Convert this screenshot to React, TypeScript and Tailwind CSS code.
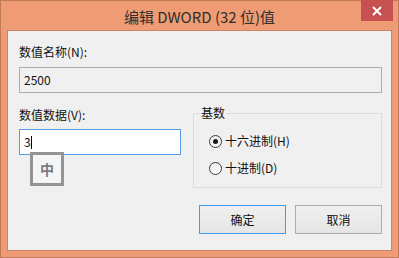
import { useState } from "react";

const font = { fontFamily: '"Noto Sans CJK SC", "Noto Sans", sans-serif' };

export default function App() {
  const [radix, setRadix] = useState<"hex" | "dec">("hex");

  return (
    <div
      className="w-[399px] h-[258px] bg-[#EF9B73] border border-[#C07A58] flex flex-col text-[12px] text-[#111]"
      style={font}
    >
      {/* Title bar */}
      <div className="relative h-[29px] flex items-center justify-center shrink-0">
        <span className="text-[15px] text-[#2e2e2e] leading-none mt-[1px]">编辑 DWORD (32 位)值</span>
        <button className="absolute right-[5px] top-[-1px] w-[32px] h-[21px] bg-[#C75050] flex items-center justify-center">
          <svg width="10" height="10" viewBox="0 0 10 10">
            <path d="M1 1 L9 9 M9 1 L1 9" stroke="#fff" strokeWidth="2" />
          </svg>
        </button>
      </div>

      {/* Client area */}
      <div className="mx-[6px] h-[221px] border border-[#C98565] bg-[#F0F0F0] pl-[11px] pr-[9px] flex flex-col">
        <label className="mt-[13px] leading-4 h-4">数值名称(N):</label>
        <div className="mt-[7px] h-[26px] border border-[#ADADAD] bg-[#F0F0F0] flex items-center pl-[4px]">
          2500
        </div>

        <div className="flex items-start">
          <div className="w-[162px] flex flex-col">
            <label className="mt-[14px] leading-4 h-4">数值数据(V):</label>
            <div className="relative mt-[6px] h-[26px] border border-[#569DE5] bg-white flex items-center pl-[4px]">
              <span>3</span>
              <span className="w-px h-[13px] bg-black" />
              {/* IME indicator */}
              <div className="absolute left-[10px] top-[22px] w-[34px] h-[34px] border-[3px] border-[#949494] bg-[#F5F5F5] flex items-center justify-center">
                <span className="text-[14px] font-bold text-[#7B7B7B] leading-none">中</span>
              </div>
            </div>
          </div>

          <fieldset className="ml-[12px] mt-[12px] w-[189px] h-[83px] border border-[#DCDCDC] flex flex-col">
            <legend className="ml-[6px] px-[1px] leading-4">基数</legend>
            <RadioRow
              label="十六进制(H)"
              checked={radix === "hex"}
              onSelect={() => setRadix("hex")}
              className="mt-[12px]"
            />
            <RadioRow
              label="十进制(D)"
              checked={radix === "dec"}
              onSelect={() => setRadix("dec")}
              className="mt-[11px]"
            />
          </fieldset>
        </div>

        <div className="mt-[17px] flex justify-end gap-[9px]">
          <button className="w-[87px] h-[29px] border border-[#3C9BEF] bg-gradient-to-b from-[#F0F0F0] to-[#E5E5E5]">
            确定
          </button>
          <button className="w-[87px] h-[29px] border border-[#ACACAC] bg-gradient-to-b from-[#F0F0F0] to-[#E5E5E5]">
            取消
          </button>
        </div>
      </div>
    </div>
  );
}

function RadioRow({
  label,
  checked,
  onSelect,
  className,
}: {
  label: string;
  checked: boolean;
  onSelect: () => void;
  className?: string;
}) {
  return (
    <div className={`ml-[15px] flex items-center h-4 cursor-default ${className ?? ""}`} onClick={onSelect}>
      <span className="w-[13px] h-[13px] rounded-full border border-[#3a3a3a] bg-gradient-to-b from-[#EDEDED] to-white flex items-center justify-center">
        {checked && <span className="w-[5px] h-[5px] rounded-full bg-[#1a1a1a]" />}
      </span>
      <span className="ml-[3px] leading-4">{label}</span>
    </div>
  );
}
